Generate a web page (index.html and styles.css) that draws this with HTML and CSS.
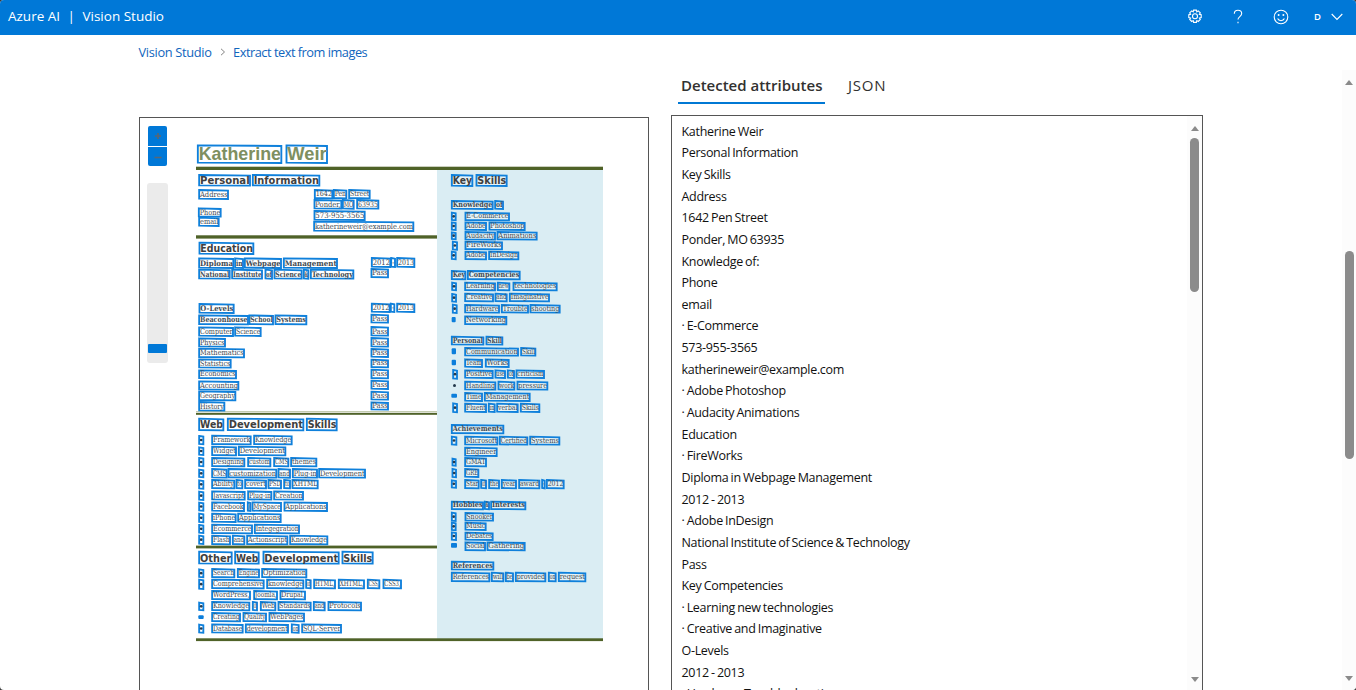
FILE: index.html
```html
<!DOCTYPE html>
<html lang="en">
<head>
<meta charset="utf-8">
<title>Vision Studio - Extract text from images</title>
<link rel="stylesheet" href="styles.css">
</head>
<body>
<div class="app">
  <header class="topbar">
    <div class="brand"><span>Azure AI</span><span class="brand-sep">|</span><span>Vision Studio</span></div>
    <div class="actions">
      <svg class="icon gear" viewBox="0 0 16 16"><path d="M6.6 1.1h2.8l.4 1.7 1.5-.9 2 2-.9 1.5 1.8.4v2.8l-1.8.5.9 1.4-2 2-1.5-.9-.4 1.8H6.6l-.4-1.8-1.5.9-2-2 .9-1.4-1.8-.5V5.800l1.800-.4-.9-1.500 2-2 1.500.9z"/><circle cx="8" cy="7.300" r="2.500"/></svg>
      <svg class="icon help" viewBox="0 0 16 16"><path d="M4.300 4.800C4.300 2.500 5.700 1.300 8 1.300s3.700 1.200 3.700 3.300c0 3-3.700 3.100-3.700 6"/><path d="M8 12.800v1.500"/></svg>
      <svg class="icon smile" viewBox="0 0 16 16"><circle cx="8" cy="8" r="6.800"/><path d="M4.600 9.600c1.300 2.800 5.500 2.800 6.800 0"/><circle class="eye" cx="5.600" cy="6" r="1"/><circle class="eye" cx="10.400" cy="6" r="1"/></svg>
      <span class="initial">D</span>
      <svg class="icon chevron" viewBox="0 0 12 8"><path d="M.7 1 6 6.500 11.300 1"/></svg>
    </div>
  </header>
  <nav class="crumbs">
    <a>Vision Studio</a>
    <svg viewBox="0 0 6 8"><path d="M1 .8 4.500 4 1 7.200"/></svg>
    <a class="current">Extract text from images</a>
  </nav>
  <main class="workspace">
    <section class="viewer">
      <svg class="document" id="document" viewBox="0 0 508 580"></svg>
      <div class="zoom-controls">
        <button class="zoom-btn"><svg viewBox="0 0 8 8"><path d="M4 1v6M1 4h6"/></svg></button>
        <button class="zoom-btn"><svg viewBox="0 0 8 8"><path d="M.5 4.500h7"/></svg></button>
        <div class="zoom-track"><div class="zoom-handle"></div></div>
      </div>
    </section>
    <section class="results">
      <div class="tabs"><div class="tab active">Detected attributes</div><div class="tab json">JSON</div></div>
      <div class="output">
        <ul class="lines">
          <li>Katherine Weir</li><li>Personal Information</li><li>Key Skills</li><li>Address</li><li>1642 Pen Street</li><li>Ponder, MO 63935</li><li>Knowledge of:</li><li>Phone</li><li>email</li><li>· E-Commerce</li><li>573-955-3565</li><li>katherineweir@example.com</li><li>· Adobe Photoshop</li><li>· Audacity Animations</li><li>Education</li><li>· FireWorks</li><li>Diploma in Webpage Management</li><li>2012 - 2013</li><li>· Adobe InDesign</li><li>National Institute of Science &amp; Technology</li><li>Pass</li><li>Key Competencies</li><li>· Learning new technologies</li><li>· Creative and Imaginative</li><li>O-Levels</li><li>2012 - 2013</li><li>· Hardware Trouble shooting</li>
        </ul>
        <div class="scrollbar inner"><i class="up"></i><i class="thumb"></i><i class="down"></i></div>
      </div>
    </section>
    <div class="scrollbar outer"><i class="up"></i><i class="thumb"></i><i class="down"></i></div>
  </main>
</div>
<script src="document.js"></script>
</body>
</html>
```
FILE: styles.css
```css
* { box-sizing: border-box; }
html { background: #3a3a3a; }
body { margin: 0; font-family: "Open Sans", "Noto Sans", sans-serif; color: #111; overflow: hidden; }
.app { height: 690px; display: flex; flex-direction: column; background: #fff; border-radius: 4px; overflow: hidden; }
.topbar { flex: none; height: 35px; padding: 0 13px 0 8px; display: flex; align-items: flex-start; justify-content: space-between; background: #0078d7; color: #fff; }
.brand { display: flex; gap: 7.500px; font-size: 13.5px; line-height: 33px; white-space: nowrap; }
.actions { display: flex; align-items: center; height: 33px; }
.icon { fill: none; stroke: #fff; stroke-width: 1.1; width: 16px; height: 16px; }
.icon .eye { fill: #fff; stroke: none; }
.help { margin-left: 27px; }
.smile { margin-left: 27px; }
.initial { font-size: 9.5px; font-weight: 600; width: 8px; margin-left: 25px; }
.chevron { width: 12px; height: 8px; margin-left: 9px; }
.crumbs { flex: none; height: 35px; padding: 0 0 2px 138.5px; display: flex; align-items: center; font-size: 12.8px; color: #1065bd; white-space: nowrap; letter-spacing: -.32px; }
.crumbs .current { letter-spacing: -.49px; }
.crumbs svg { width: 6px; height: 8px; margin: 0 7.500px 0 8px; fill: none; stroke: #777; stroke-width: .9; }
.workspace { flex: 1; min-height: 0; display: flex; padding-left: 139px; }
.viewer { position: relative; width: 510px; height: 600px; margin-top: 47px; border: 1px solid #555; flex: none; }
.document { display: block; width: 508px; height: 580px; }
.zoom-controls { position: absolute; left: 7px; top: 8px; width: 21px; display: flex; flex-direction: column; align-items: center; }
.zoom-btn { width: 19px; height: 20px; padding: 0; border: 0; border-radius: 2px 2px 0 0; background: #0078d7; display: flex; align-items: center; justify-content: center; }
.zoom-btn + .zoom-btn { margin-top: 1px; height: 19px; border-radius: 0 0 2px 2px; }
.zoom-btn svg { width: 8px; height: 8px; stroke: #5c6670; stroke-width: 1.6; fill: none; }
.zoom-track { width: 21px; height: 180px; margin-top: 17px; padding: 161px 1px 0; background: #ebebeb; border-radius: 3px; }
.zoom-handle { height: 9px; border-radius: 1px; background: #0078d7; }
.results { flex: none; width: 532px; margin-left: 22px; }
.tabs { display: flex; height: 34px; padding-left: 7px; gap: 20px; font-size: 15px; line-height: 31px; color: #323130; }
.tab { padding: 0 3px; white-space: nowrap; }
.tab.active { width: 147px; font-weight: 600; border-bottom: 2px solid #0078d4; }
.tab.json { letter-spacing: .8px; }
.output { display: flex; height: 600px; margin-top: 11px; border: 1px solid #555; }
.lines { flex: 1; margin: 0; padding: 4.700px 0 0 9.500px; list-style: none; font-size: 12.5px; line-height: 21.640px; letter-spacing: -.3px; word-spacing: -.8px; white-space: nowrap; }
.scrollbar { flex: none; display: flex; flex-direction: column; align-items: center; background: #fcfcfc; }
.scrollbar i { display: block; }
.inner { width: 15px; height: 574px; padding-top: 10px; }
.outer { width: 14px; margin-left: auto; height: 620px; padding-top: 10px; }
.up { border: 4.500px solid transparent; border-top: 0; border-bottom: 5px solid #8a8a8a; }
.down { border: 4.500px solid transparent; border-bottom: 0; border-top: 5px solid #8a8a8a; margin-top: auto; margin-bottom: 8px; }
.outer .down { margin-bottom: 9px; }
.thumb { width: 9px; border-radius: 5px; background: #8b8b8b; }
.inner .thumb { height: 154px; margin-top: 7px; }
.outer .thumb { height: 208px; margin-top: 166px; }
.paper-side { fill: #daedf3; }
.rule { fill: #4f6228; }
.hairline { fill: #c3cbb0; }
.box { fill: #fff; fill-opacity: .3; stroke: #0f80db; stroke-width: 5.6; }
.word { font-family: "DejaVu Serif", serif; font-size: 23px; fill: #424b53; }
.strong .word { font-weight: bold; }
.heading .word { font-family: "DejaVu Sans", sans-serif; font-size: 29px; font-weight: bold; fill: #404040; }
.title .word { font-family: "Liberation Sans", sans-serif; font-size: 55px; font-weight: bold; fill: #7e8f60; }
.bullet { fill: #24394c; }
.spot { fill: #0b7edb; }
```
FILE: document.js
```js
// Word regions, three units per pixel, relative to each section's origin.
// Row: style, top, bottom, then "left right word" entries.
// Styles: t title, h heading, b bold, n normal, o bullet region, s filled bullet.
const sections = [
  [138, 110, `t 105 159|178 431 Katherine|444 568 Weir
h 194 227|182 337 Personal|343 545 Information
n 239 267|182 271 Address
n 294 320|181 249 Phone
n 322 348|182 243 email`],
  [300, 140, `n 149 175|43 98 1642|100 140 Pen|146 210 Street
n 179 206|42 125 Ponder,|127 162 MO|170 236 63935
n 212 240|42 195 573-955-3565
n 244 273|41 341 katherineweir@example.com`],
  [190, 235, `h 22 57|27 191 Education
b 69 99|26 131 Diploma|134 160 in|163 274 Webpage|280 442 Management
n 68 96|544 602 2012|602 616 -|620 674 2013
b 103 131|26 120 National|125 217 Institute|225 247 of|252 336 Science|340 356 &|361 491 Technology
n 101 127|543 595 Pass
b 206 234|27 132 O-Levels
n 205 231|544 600 2012|601 614 -|620 674 2013
b 240 268|26 175 Beaconhouse|177 250 School|255 350 Systems
n 238 263|543 595 Pass
n 276 303|26 130 Computer|134 213 Science
n 275 302|543 595 Pass
n 309 335|26 106 Physics
n 308 335|543 595 Pass
n 340 367|26 163 Mathematics
n 341 366|543 595 Pass
n 372 398|26 123 Statistics
n 373 397|543 595 Pass
n 405 430|26 139 Economics
n 403 430|543 595 Pass
n 438 464|26 146 Accounting
n 436 462|543 595 Pass
n 468 496|26 137 Geography
n 469 494|543 595 Pass
n 500 527|26 104 History
n 501 524|543 595 Pass`],
  [190, 410, `h 25 61|26 101 Web|112 341 Development|349 441 Skills
n 76 103|65 183 Framework|191 306 Knowledge
n 109 136|65 139 Widget|145 287 Development
n 143 169|65 164 Designing|173 242 custom|251 296 CMS|302 380 themes
n 176 203|65 111 CMS|114 260 customization|264 301 and|307 382 Plug-in|386 526 Development
n 209 235|65 134 Ability|138 158 to|164 229 covert|234 274 PSD|281 301 to|306 384 XHTML
n 243 269|65 165 Javascript|173 245 Plug-in|251 340 Creation
n 276 303|65 163 Facebook|172 182 /|186 274 MySpace|282 412 Applications
n 310 336|65 138 iPhone|143 273 Applications
n 343 370|65 187 Ecommerce|193 328 Integegration
n 376 403|65 121 Flash|127 164 and|170 293 Actionscript|299 413 Knowledge
o 77 103|26 41 •
o 111 135|26 41 •
o 143 169|26 41 •
o 178 202|26 41 •
o 210 236|26 41 •
o 244 270|26 41 •
o 277 302|26 41 •
o 310 337|26 41 •
o 344 369|26 41 •
o 376 402|26 41 •`],
  [190, 540, `h 34 71|26 126 Other|134 207 Web|219 447 Development|456 549 Skills
n 86 112|65 134 Search|142 208 Engine|215 350 Optimization
n 118 145|65 222 Comprehensive|230 341 knowledge|347 363 of|371 436 HTML,|445 523 XHTML,|532 569 CSS,|579 634 CSS3,
n 152 178|65 181 WordPress,|191 262 Joomla,|270 346 Drupal,
n 185 211|65 179 Knowledge|187 202 of|211 257 Web|264 363 Standards|370 405 and|414 514 Protocols
n 218 244|65 151 Creating|159 229 Quality|237 343 WebPages
n 252 278|65 159 Database|166 295 development|304 327 on|335 454 SQL-Server
o 87 112|26 41 •
o 118 147|26 41 •
o 187 211|26 41 •
s 226 237|25 41 •
o 253 278|26 41 •`],
  [435, 160, `h 44 78|49 113 Key|123 216 Skills
b 122 147|49 174 Knowledge|179 205 of
n 157 181|90 223 E-Commerce
n 186 210|90 154 Adobe|162 270 Photoshop
n 215 239|90 181 Audacity|186 306 Animations
n 244 268|90 202 FireWorks
n 274 298|90 154 Adobe|161 251 InDesign
b 332 358|49 92 Key|97 255 Competencies
n 367 391|89 181 Learning|187 224 new|234 366 technologies
n 400 424|89 175 Creative|180 216 and|223 343 Imaginative
n 434 458|89 193 Hardware|199 280 Trouble|285 375 shooting
n 468 493|89 215 Networking
o 157 181|49 63 •
o 186 210|49 63 •
o 216 238|49 63 •
o 244 269|52 67 •
o 274 298|49 63 •
o 367 391|50 64 •
o 401 425|50 64 •
o 433 459|52 66 •
s 471 487|50 62 •`],
  [435, 325, `b 34 59|49 146 Personal|153 203 Skill
n 68 92|89 250 Communication|257 302 Skill
n 102 126|89 142 Team|151 222 Works
n 135 159|89 174 Positive|180 211 use|217 238 of|243 328 criticism
n 169 194|89 182 Handling|189 239 work|246 338 pressure
n 203 228|89 142 Time|148 285 Management
n 235 261|89 154 Fluent|160 180 in|185 249 verbal|256 314 Skills
b 299 325|49 206 Achievements
n 334 359|89 188 Microsoft|193 278 Certified|284 374 Systems
n 367 393|89 186 Engineer
n 398 424|89 154 GMAT
n 431 456|89 131 GRE
n 464 490|89 132 Star|137 154 of|161 193 the|199 244 year|251 314 award|320 330 -|334 387 2012
o 134 161|53 67 •
o 234 262|53 67 •
o 334 359|49 65 •
o 400 422|51 63 •
o 431 457|51 64 •
o 465 488|49 64 •
s 70 88|50 63 •
s 104 121|50 63 •
s 206 218|49 66 •`],
  [435, 490, `b 34 58|49 145 Hobbies|148 163 &|167 272 Interests
n 68 92|90 175 Snooker
n 97 120|90 153 Music
n 127 150|90 174 Debates
n 156 181|90 151 Social|156 270 Gathering
b 214 239|49 176 References
n 247 274|49 164 References|169 206 will|211 235 be|241 332 provided|340 363 on|370 452 request
o 67 93|49 63 •
o 97 121|49 63 •
o 126 150|49 64 •
s 159 173|48 66 •`]
];

const NS = "http://www.w3.org/2000/svg";
const canvas = document.getElementById("document");
function add(parent, name, attrs, text) {
  const el = document.createElementNS(NS, name);
  for (const key in attrs) el.setAttribute(key, attrs[key]);
  if (text) el.textContent = text;
  parent.appendChild(el);
  return el;
}

const page = add(canvas, "g", { transform: "translate(-140 -118)" });
add(page, "rect", { class: "paper-side", x: 437, y: 170, width: 166, height: 469 });
[[166.7, 407], [235.3, 241], [412.8, 241, 2], [545.6, 241, 2.8], [638.3, 407, 2.8]].forEach(([y, width, height = 3.3]) =>
  add(page, "rect", { class: "rule", x: 196, y, width, height }));
add(page, "rect", { class: "hairline", x: 196, y: 411, width: 241, height: 1 });

const groups = { t: "title", h: "heading", b: "strong", n: "normal", o: "bullets", s: "bullets" };
const baseline = { t: 8, h: 6, b: 6, n: 6 };
for (const [x, y, rows] of sections) {
  const section = add(page, "g", { transform: `translate(${x} ${y}) scale(.33333)` });
  for (const row of rows.split("\n")) {
    const [head, ...words] = row.split("|");
    const [style, top, bottom] = head.split(" ");
    const group = add(section, "g", { class: groups[style] });
    for (const entry of words) {
      const [left, right, word] = entry.split(" ");
      const width = right - left, height = bottom - top;
      if (style === "s") {
        add(group, "rect", { class: "spot", x: left, y: top, width, height, rx: 3 });
        continue;
      }
      add(group, "path", { class: "box", d: `M${+left + 1.5} ${+top + 1}L${right - 1} ${+top + 3}L${right - 1} ${bottom}L${+left + 1.5} ${bottom - 1}Z` });
      if (style === "o") {
        add(group, "circle", { class: "bullet", cx: +left + width / 2, cy: +top + height / 2, r: 4 });
      } else {
        add(group, "text", { class: "word", x: +left + 4, y: bottom - baseline[style], textLength: Math.max(width - 6, 5), lengthAdjust: "spacingAndGlyphs" }, word);
      }
    }
  }
}
add(page, "circle", { class: "bullet", cx: 454.5, cy: 385.5, r: 1.5 });
```
